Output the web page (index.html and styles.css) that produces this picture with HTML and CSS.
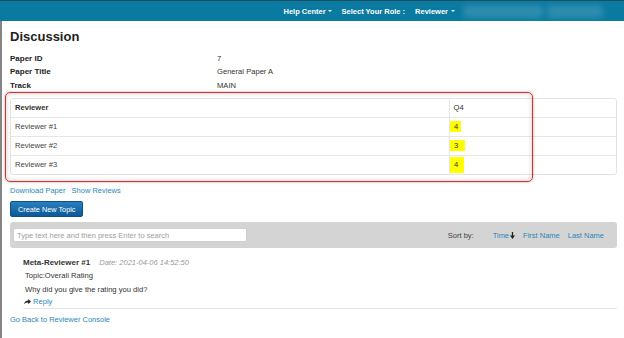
FILE: index.html
```html
<!DOCTYPE html>
<html lang="en">
<head>
    <meta charset="UTF-8">
    <meta name="viewport" content="width=device-width, initial-scale=1.0">
    <title>Discussion</title>
    <link rel="stylesheet" href="styles.css">
</head>
<body>
    <header class="topbar">
        <nav class="topnav">
            <span class="nav-item">Help Center<span class="caret"></span></span>
            <span class="nav-item">Select Your Role :</span>
            <span class="nav-item nav-role">Reviewer <span class="caret"></span></span>
            <span class="blur blur-a"></span>
            <span class="blur blur-b"></span>
        </nav>
    </header>

    <div class="page">
        <h1>Discussion</h1>

        <div class="info">
            <div class="info-label">Paper ID</div>
            <div class="info-value">7</div>
            <div class="info-label">Paper Title</div>
            <div class="info-value">General Paper A</div>
            <div class="info-label">Track</div>
            <div class="info-value">MAIN</div>
        </div>

        <div class="panel-wrap">
            <div class="panel">
                <table class="scores">
                    <thead>
                        <tr>
                            <th class="col-name">Reviewer</th>
                            <th class="col-q">Q4</th>
                        </tr>
                    </thead>
                    <tbody>
                        <tr>
                            <td class="col-name">Reviewer #1</td>
                            <td class="col-q"><span class="mark mark-1">4</span></td>
                        </tr>
                        <tr>
                            <td class="col-name">Reviewer #2</td>
                            <td class="col-q"><span class="mark mark-2">3</span></td>
                        </tr>
                        <tr>
                            <td class="col-name">Reviewer #3</td>
                            <td class="col-q"><span class="mark mark-3">4</span></td>
                        </tr>
                    </tbody>
                </table>
            </div>
            <div class="highlight-box"></div>
        </div>

        <div class="paper-links">
            <a href="#">Download Paper</a>
            <a href="#">Show Reviews</a>
        </div>

        <button class="btn-topic" type="button">Create New Topic</button>

        <div class="search-bar">
            <input class="search-input" type="text" placeholder="Type text here and then press Enter to search">
            <div class="sort">
                <span class="sort-label">Sort by:</span>
                <a href="#" class="sort-time">Time<svg class="sort-arrow" width="5" height="7" viewBox="0 0 5 7"><path d="M2.5 0v4.2" stroke="#222" stroke-width="1.3"/><path d="M0 3.6h5L2.5 7z" fill="#222"/></svg></a>
                <a href="#">First Name</a>
                <a href="#">Last Name</a>
            </div>
        </div>

        <div class="comment">
            <div class="comment-head">
                <span class="author">Meta-Reviewer #1</span>
                <span class="date">Date: 2021-04-06 14:52:50</span>
            </div>
            <div class="comment-line">Topic:Overall Rating</div>
            <div class="comment-line">Why did you give the rating you did?</div>
            <div class="comment-reply">
                <svg class="reply-icon" width="7" height="6" viewBox="0 0 7 6"><path d="M7 2.6L4.2 0v1.5C2 1.6.4 2.9 0 5.6c.9-1.4 2.3-2 4.2-2v1.6z" fill="#222"/></svg>
                <a href="#">Reply</a>
            </div>
        </div>

        <a href="#" class="back-link">Go Back to Reviewer Console</a>
    </div>
</body>
</html>
```

FILE: styles.css
```css
html, body {
    height: 100%;
}

* {
    box-sizing: border-box;
}

body {
    margin: 0;
    font-family: "Liberation Sans", Arial, sans-serif;
    font-size: 7.6px;
    color: #333;
    background: #fff;
}

a {
    color: #2b88bb;
    text-decoration: none;
}

/* top bar */
.topbar {
    height: 21px;
    background: #0a7aa1;
    border-top: 1px solid #1d4d63;
}

.topnav {
    display: flex;
    align-items: center;
    justify-content: flex-end;
    height: 100%;
    padding-right: 21px;
}

.nav-item {
    color: #fff;
    font-weight: bold;
    font-size: 7.5px;
    margin-right: 10px;
    display: flex;
    align-items: center;
}

.nav-role {
    margin-right: 8px;
}

.caret {
    display: inline-block;
    width: 0;
    height: 0;
    margin-left: 2px;
    border-left: 2px solid transparent;
    border-right: 2px solid transparent;
    border-top: 2px solid #fff;
}

.nav-role .caret {
    margin-left: 3px;
}

.blur {
    height: 13px;
    background: rgba(255, 255, 255, 0.15);
    filter: blur(3px);
    border-radius: 4px;
}

.blur-a {
    width: 80px;
    margin-right: 4px;
}

.blur-b {
    width: 56px;
}

/* page */
.page {
    min-height: calc(100% - 21px);
    border-left: 2px solid #858585;
    padding: 8px 7px 0 8px;
}

h1 {
    margin: 0;
    font-size: 13px;
    line-height: 15px;
    color: #222;
}

.info {
    display: grid;
    grid-template-columns: 207px 1fr;
    grid-auto-rows: 13.5px;
    align-items: center;
    margin-top: 7.5px;
}

.info-label {
    font-weight: bold;
    font-size: 8px;
    color: #222;
}

.info-value {
    color: #333;
}

/* reviewer scores */
.panel-wrap {
    position: relative;
    margin-top: 6px;
}

.panel {
    border: 1px solid #e3e3e3;
    border-radius: 3px;
}

.scores {
    width: 100%;
    border-collapse: collapse;
}

.scores th,
.scores td {
    text-align: left;
    padding: 0 4px;
    color: #444;
}

.scores th {
    height: 18px;
    font-weight: bold;
    color: #333;
}

.scores th.col-q {
    font-weight: normal;
}

.scores td {
    height: 19px;
    border-top: 1px solid #e6e6e6;
}

.scores .col-name {
    width: 438px;
    border-right: 1px solid #e6e6e6;
}

.scores td.col-q {
    padding: 0;
}

.mark {
    display: inline-block;
    background: #ffff00;
    color: #333;
    padding-left: 4.5px;
    vertical-align: middle;
}

.mark-1 {
    width: 11.5px;
    height: 11.5px;
    line-height: 11.5px;
}

.mark-2 {
    width: 15.5px;
    height: 11px;
    line-height: 11px;
}

.mark-3 {
    width: 14.5px;
    height: 15.5px;
    line-height: 15.5px;
}

.highlight-box {
    position: absolute;
    left: -5.5px;
    top: -6px;
    width: 528.5px;
    height: 89.5px;
    border: 1.5px solid #e42a2a;
    border-radius: 5px;
    box-shadow: 0 0 3px rgba(0, 0, 0, 0.3), inset 0 0 5px rgba(0, 0, 0, 0.2);
    pointer-events: none;
}

/* links and actions */
.paper-links {
    margin-top: 9px;
    line-height: 13px;
    font-size: 7.5px;
}

.paper-links a {
    margin-right: 4px;
}

.btn-topic {
    display: block;
    margin-top: 4px;
    height: 16px;
    padding: 0 7px;
    font-family: inherit;
    font-size: 7.3px;
    color: #fff;
    background: linear-gradient(#2a7fbf, #0c5996);
    border: 1px solid #0b5088;
    border-radius: 2px;
}

.search-bar {
    display: flex;
    align-items: center;
    justify-content: space-between;
    margin-top: 5px;
    height: 26px;
    padding: 0 13px 0 3px;
    background: #d4d4d4;
    border-radius: 3px;
}

.search-input {
    width: 234px;
    height: 14px;
    padding: 0 3px;
    font-family: inherit;
    font-size: 7.5px;
    border: 1px solid #cfcfcf;
    border-radius: 2px;
    background: #fff;
}

.search-input::placeholder {
    color: #a0a0a0;
}

.sort {
    display: flex;
    align-items: center;
    font-size: 7.5px;
}

.sort-label {
    color: #444;
    margin-right: 19px;
}

.sort a {
    margin-left: 8px;
}

.sort a.sort-time {
    margin-left: 0;
    display: flex;
    align-items: center;
}

.sort-arrow {
    margin-left: 1px;
}

/* comment */
.comment {
    margin: 7.5px 0 0 13px;
    border-bottom: 1px solid #e4e4e4;
}

.comment-head,
.comment-line {
    height: 13.5px;
    line-height: 13.5px;
}

.comment-line {
    padding-left: 2px;
    color: #333;
}

.author {
    font-weight: bold;
    font-size: 8px;
    color: #333;
}

.date {
    margin-left: 7px;
    font-style: italic;
    color: #999;
    font-size: 7.5px;
}

.comment-reply {
    display: flex;
    align-items: center;
    height: 11.5px;
    padding-left: 1px;
}

.reply-icon {
    margin-right: 2px;
}

.back-link {
    display: block;
    margin-top: 4px;
    line-height: 13px;
    font-size: 7.5px;
}
```
